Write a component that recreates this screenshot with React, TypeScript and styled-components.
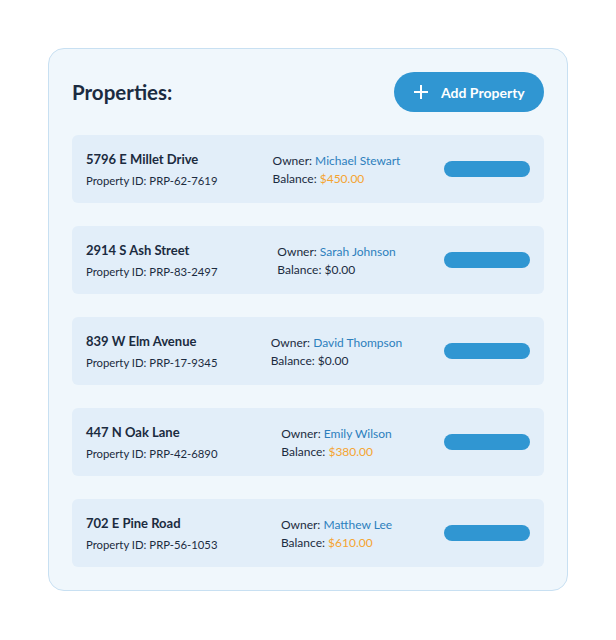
import React from 'react';
import styled, { createGlobalStyle } from 'styled-components';

const GlobalStyle = createGlobalStyle`
  * { box-sizing: border-box; }
  body {
    margin: 0;
    background: #ffffff;
    font-family: Lato, "Noto Sans", sans-serif;
    color: #1b2b40;
  }
`;

const Page = styled.div`
  padding: 48px;
  width: 616px;
`;

const Panel = styled.section`
  width: 520px;
  background: #f0f7fc;
  border: 1px solid #c8e0f2;
  border-radius: 16px;
  padding: 23px;
  display: flex;
  flex-direction: column;
  gap: 23px;
`;

const Header = styled.div`
  display: flex;
  align-items: center;
  justify-content: space-between;
  height: 40px;
`;

const Title = styled.h2`
  margin: 0;
  font-size: 20.5px;
  font-weight: 700;
  color: #1b2b40;
`;

const AddButton = styled.button`
  display: flex;
  align-items: center;
  gap: 13px;
  height: 40px;
  width: 150px;
  padding: 0 0 0 20px;
  border: none;
  border-radius: 20px;
  background: #3096d2;
  color: #ffffff;
  font-family: inherit;
  font-size: 14px;
  font-weight: 700;
  cursor: pointer;
`;

const List = styled.div`
  display: flex;
  flex-direction: column;
  gap: 23px;
`;

const Row = styled.div`
  display: grid;
  grid-template-columns: 143px 1fr 86px;
  align-items: center;
  height: 68px;
  padding: 0 14px;
  background: #e2eef9;
  border-radius: 6px;
`;

const Info = styled.div`
  display: flex;
  flex-direction: column;
  gap: 6px;
  padding-top: 2px;
`;

const Address = styled.div`
  font-size: 13px;
  font-weight: 700;
  line-height: 16px;
`;

const Meta = styled.div`
  font-size: 12px;
  line-height: 16px;
  white-space: nowrap;
`;

const IdLine = styled(Meta)`
  font-size: 11.3px;
`;

const Details = styled.div`
  justify-self: center;
  display: flex;
  flex-direction: column;
  gap: 2px;
  padding-top: 2px;
`;

const Value = styled.span<{ $tone: 'blue' | 'orange' | 'plain' }>`
  color: ${(p) =>
    p.$tone === 'blue' ? '#2d7fbd' : p.$tone === 'orange' ? '#f5a431' : '#1b2b40'};
`;

const Bar = styled.div`
  height: 16px;
  border-radius: 8px;
  background: #3096d2;
`;

type Property = {
  address: string;
  id: string;
  owner: string;
  balance: number;
};

const properties: Property[] = [
  { address: '5796 E Millet Drive', id: 'PRP-62-7619', owner: 'Michael Stewart', balance: 450 },
  { address: '2914 S Ash Street', id: 'PRP-83-2497', owner: 'Sarah Johnson', balance: 0 },
  { address: '839 W Elm Avenue', id: 'PRP-17-9345', owner: 'David Thompson', balance: 0 },
  { address: '447 N Oak Lane', id: 'PRP-42-6890', owner: 'Emily Wilson', balance: 380 },
  { address: '702 E Pine Road', id: 'PRP-56-1053', owner: 'Matthew Lee', balance: 610 },
];

const PlusIcon = () => (
  <svg width="14" height="14" viewBox="0 0 14 14" fill="none">
    <path d="M7 0.5v13M0.5 7h13" stroke="#fff" strokeWidth="2" strokeLinecap="round" />
  </svg>
);

const App = () => {
  return (
    <Page>
      <GlobalStyle />
      <Panel>
        <Header>
          <Title>Properties:</Title>
          <AddButton>
            <PlusIcon />
            Add Property
          </AddButton>
        </Header>
        <List>
          {properties.map((p) => (
            <Row key={p.id}>
              <Info>
                <Address>{p.address}</Address>
                <IdLine>Property ID: {p.id}</IdLine>
              </Info>
              <Details>
                <Meta>
                  Owner: <Value $tone="blue">{p.owner}</Value>
                </Meta>
                <Meta>
                  Balance:{' '}
                  <Value $tone={p.balance > 0 ? 'orange' : 'plain'}>${p.balance.toFixed(2)}</Value>
                </Meta>
              </Details>
              <Bar />
            </Row>
          ))}
        </List>
      </Panel>
    </Page>
  );
};

export default App;
